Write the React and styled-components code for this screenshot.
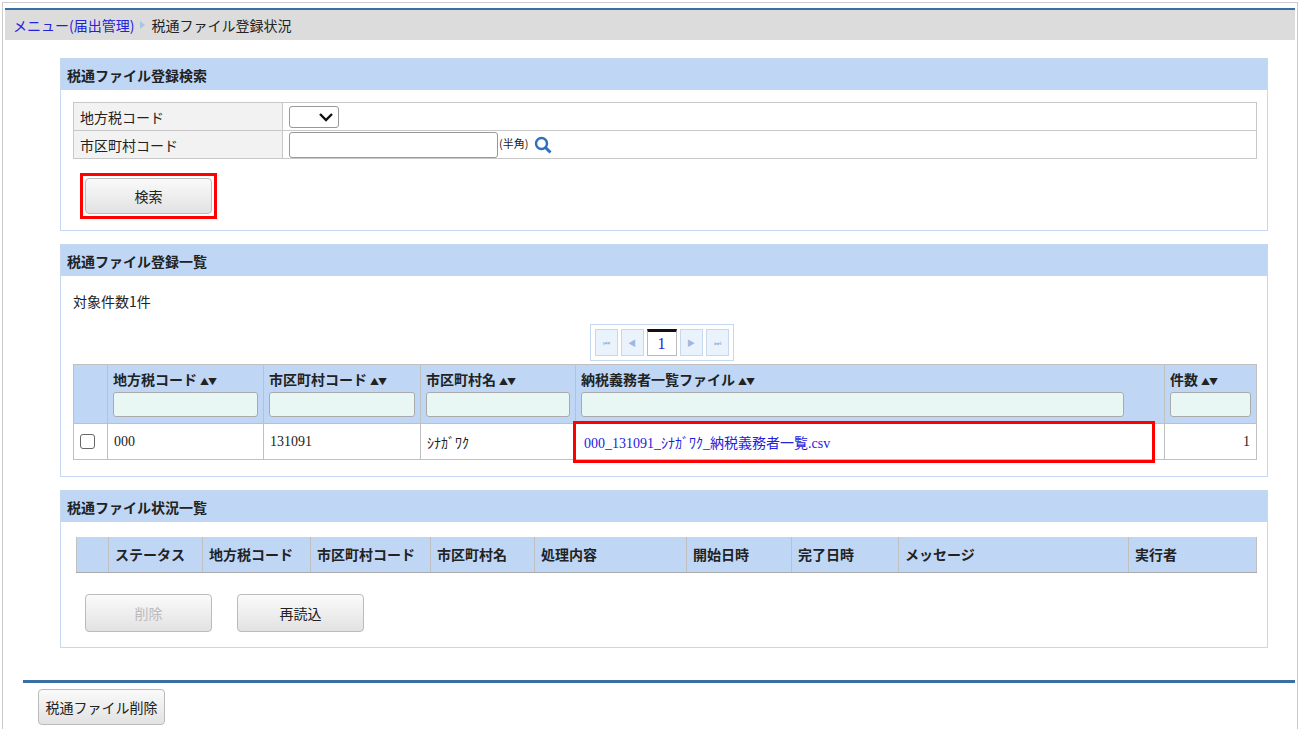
import React from "react";
import styled, { createGlobalStyle } from "styled-components";

const G = createGlobalStyle`
  html,body{margin:0;padding:0;background:#fff;}
  body{font-family:"Noto Sans CJK JP","Liberation Sans",sans-serif;font-size:14px;color:#222;}
  *{box-sizing:border-box;}
`;
const Frame = styled.div`
  margin:2px 3px 0 2px;border:1px solid #ccc;border-bottom:none;height:727px;
  padding:5px 2px 0 2px;display:flex;flex-direction:column;
`;
const Crumb = styled.div`
  border-top:2px solid #3a6fa5;background:#dcdcdc;height:32px;display:flex;align-items:center;
  padding-left:8px;gap:6px;font-size:14px;
  a{color:#2222dd;text-decoration:none;}
`;
const Tri = styled.span`
  width:0;height:0;border-left:5px solid #a9c4e4;border-top:4px solid transparent;border-bottom:4px solid transparent;
`;
const Panel = styled.section`
  margin:${p=>p.$mt}px 27px 0 55px;border:1px solid #c5d8f0;height:${p=>p.$h}px;display:flex;flex-direction:column;
`;
const PHead = styled.div`
  background:#bfd7f5;height:31px;display:flex;align-items:center;padding-left:6px;font-weight:bold;font-size:14px;
`;
const FormT = styled.table`
  margin:12px 10px 0 12px;border-collapse:collapse;width:calc(100% - 22px);
  td{border:1px solid #c8c8c8;height:28px;padding:0 6px;}
  td:first-child{background:#f2f2f2;width:209px;}
`;
const Sel = styled.div`
  width:50px;height:22px;border:1px solid #999;border-radius:3px;display:flex;justify-content:flex-end;align-items:center;padding-right:4px;
`;
const Inp = styled.div`
  width:209px;height:26px;border:1px solid #999;border-radius:3px;display:inline-block;vertical-align:middle;
`;
const Btn = styled.div`
  width:127px;height:${p=>p.$h||36}px;border:1px solid #bbb;border-radius:4px;
  background:linear-gradient(#fafafa,#e2e2e2);display:flex;align-items:center;justify-content:center;
  color:${p=>p.$dis?"#bbb":"#222"};font-size:14px;
`;
const Red = styled.div`
  border:3px solid #f00;display:inline-flex;padding:2px;
`;
const Count = styled.div`padding:15px 0 0 12px;height:48px;`;
const Pager = styled.div`
  align-self:center;margin-left:-5px;border:1px solid #c5d8f0;display:flex;gap:3px;padding:4px;height:37px;
`;
const PB = styled.div`
  width:23px;height:27px;border:1px solid #c5d8f0;background:#eaf2fc;display:flex;align-items:center;justify-content:center;color:#9cb9e0;font-size:8px;
`;
const PCur = styled.div`
  width:30px;height:27px;border:1px solid #bbb;border-top:3px solid #111;display:flex;align-items:center;justify-content:center;color:#2222dd;font-family:"Liberation Serif",serif;font-size:16px;
`;
const DT = styled.table`
  margin:3px 10px 0 12px;border-collapse:collapse;width:calc(100% - 22px);table-layout:fixed;
  th{background:#bfd7f5;border:1px solid #c0c0c0;text-align:left;vertical-align:top;padding:4px 5px 0;font-weight:bold;height:59px;}
  td{border:1px solid #c0c0c0;height:36px;padding:0 6px;font-family:"Liberation Serif","Noto Sans CJK JP",serif;}
`;
const Filt = styled.div`height:25px;border:1px solid #aaa;border-radius:3px;background:#e8f7f3;margin-top:3px;`;
const Chk = styled.div`width:15px;height:15px;border:1px solid #666;border-radius:3px;`;
const Link = styled.span`color:#2222dd;font-family:"Liberation Serif","Noto Sans CJK JP",serif;`;
const ST = styled.table`
  margin:15px 14px 0 15px;border-collapse:collapse;width:calc(100% - 29px);table-layout:fixed;
  th{background:#bfd7f5;border:1px solid #c0c0c0;border-top:none;border-bottom:1px solid #aaa;text-align:left;padding:0 6px;height:35px;font-weight:bold;}
`;
const BtnRow = styled.div`display:flex;gap:25px;padding:21px 0 0 24px;`;
const Foot = styled.div`
  margin:32px 0 0 18px;border-top:3px solid #3a6fa5;padding:6px 0 0 15px;
`;
const sort = <span style={{fontSize:10}}>⬍</span>;
const Sort = styled.span`font-size:9px;margin-left:3px;letter-spacing:-1px;`;

export default function App(){
  return <><G/><Frame>
    <Crumb><a>メニュー(届出管理)</a><Tri/><span>税通ファイル登録状況</span></Crumb>
    <Panel $mt={18} $h={173}>
      <PHead>税通ファイル登録検索</PHead>
      <FormT><tbody>
        <tr><td>地方税コード</td><td><Sel><svg width="16" height="10" viewBox="0 0 16 10"><path d="M2 2l6 6 6-6" fill="none" stroke="#111" strokeWidth="2.4"/></svg></Sel></td></tr>
        <tr><td>市区町村コード</td><td style={{padding:"0 0 0 6px"}}><Inp/><span style={{fontSize:11,marginLeft:1}}>(半角)</span>
          <svg style={{verticalAlign:"middle",marginLeft:6}} width="18" height="18" viewBox="0 0 18 18"><circle cx="7.5" cy="7.5" r="5.5" fill="none" stroke="#2f6fc0" strokeWidth="2.4"/><path d="M11.5 11.5l5 5" stroke="#2f6fc0" strokeWidth="3"/></svg></td></tr>
      </tbody></FormT>
      <div style={{padding:"14px 0 0 19px"}}><Red><Btn>検索</Btn></Red></div>
    </Panel>
    <Panel $mt={13} $h={233}>
      <PHead>税通ファイル登録一覧</PHead>
      <Count>対象件数1件</Count>
      <Pager><PB>⏮</PB><PB>◀</PB><PCur>1</PCur><PB>▶</PB><PB>⏭</PB></Pager>
      <DT>
        <colgroup><col style={{width:34}}/><col style={{width:156}}/><col style={{width:157}}/><col style={{width:155}}/><col style={{width:589}}/><col/></colgroup>
        <thead><tr><th/>
          <th>地方税コード<Sort>▲▼</Sort><Filt/></th>
          <th>市区町村コード<Sort>▲▼</Sort><Filt/></th>
          <th>市区町村名<Sort>▲▼</Sort><Filt/></th>
          <th>納税義務者一覧ファイル<Sort>▲▼</Sort><Filt style={{width:543}}/></th>
          <th>件数<Sort>▲▼</Sort><Filt/></th>
        </tr></thead>
        <tbody><tr>
          <td><Chk/></td><td>000</td><td>131091</td><td>ｼﾅｶﾞﾜｸ</td>
          <td style={{padding:0,position:"relative"}}><div style={{position:"absolute",left:-3,top:-3,width:582,height:42,border:"3px solid #f00",display:"flex",alignItems:"center",paddingLeft:8}}><Link>000_131091_ｼﾅｶﾞﾜｸ_納税義務者一覧.csv</Link></div></td>
          <td style={{textAlign:"right"}}>1</td>
        </tr></tbody>
      </DT>
    </Panel>
    <Panel $mt={13} $h={158}>
      <PHead>税通ファイル状況一覧</PHead>
      <ST>
        <colgroup>{[32,94,108,120,104,152,105,107,230,128].map((w,i)=><col key={i} style={{width:w}}/>)}</colgroup>
        <thead><tr><th/>{["ステータス","地方税コード","市区町村コード","市区町村名","処理内容","開始日時","完了日時","メッセージ","実行者"].map(t=><th key={t}>{t}</th>)}</tr></thead>
      </ST>
      <BtnRow><Btn $dis $h={38}>削除</Btn><Btn $h={38}>再読込</Btn></BtnRow>
    </Panel>
    <Foot><Btn $h={36} style={{width:127}}>税通ファイル削除</Btn></Foot>
  </Frame></>;
}
